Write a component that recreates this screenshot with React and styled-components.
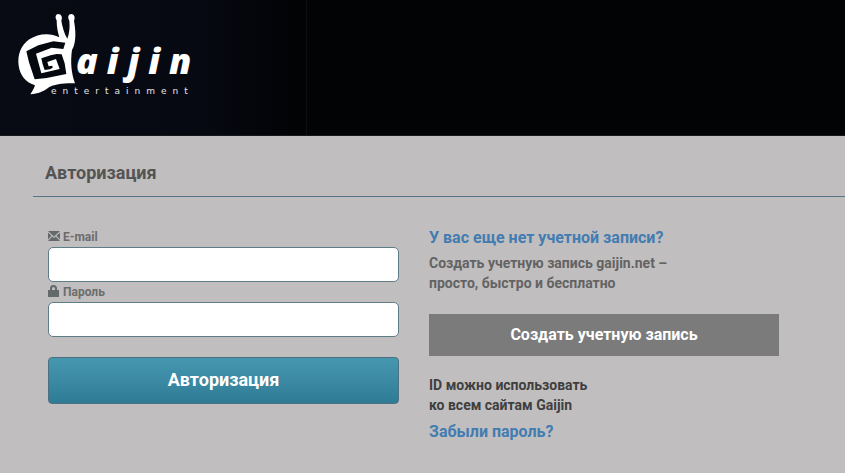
import styled, { createGlobalStyle } from "styled-components";

const GlobalStyle = createGlobalStyle`
  * {
    box-sizing: border-box;
  }

  body {
    margin: 0;
    background: #c0bebf;
    color: #606060;
    font-family: Roboto, "Liberation Sans", sans-serif;
    font-size: 14px;
    font-weight: 700;
    line-height: 20px;
  }
`;

const Header = styled.header`
  display: flex;
  height: 136px;
  border-bottom: 1px solid #15191b;
  background: linear-gradient(to right, #080b14 0, #070912 200px, #020305 290px, #020305 100%);
`;

const Brand = styled.div`
  flex: 0 0 307px;
  border-right: 1px solid #0c0e11;
`;

const LogoLink = styled.a`
  display: block;
  width: 200px;
`;

const LogoSvg = styled.svg`
  display: block;
`;

const Wordmark = styled.text`
  fill: #fff;
  font: italic 800 36px "Open Sans", sans-serif;
  letter-spacing: 9px;
`;

const Tagline = styled.text`
  fill: #e4e6ea;
  font: 400 9px "DejaVu Sans", sans-serif;
  letter-spacing: 6px;
`;

const Main = styled.main`
  padding: 25px 0 24px 33px;
`;

const Heading = styled.h1`
  margin: 0;
  padding: 0 12px 11px;
  border-bottom: 1px solid #587488;
  color: #545454;
  font-size: 18px;
  line-height: 24px;
`;

const Columns = styled.div`
  display: grid;
  grid-template-columns: 351fr 350fr;
  gap: 30px;
  padding: 30px 66px 0 15px;
`;

const Form = styled.form`
  display: flex;
  flex-direction: column;
`;

const Label = styled.label`
  display: flex;
  align-items: center;
  gap: 3px;
  height: 20px;
  color: #6c6c6c;
  font-size: 12px;
`;

const Input = styled.input`
  width: 100%;
  height: 35px;
  padding: 0 10px;
  border: 1px solid #5f7d88;
  border-radius: 5px;
  background: #fff;
  font: inherit;
`;

const LoginButton = styled.button`
  height: 47px;
  margin-top: 20px;
  padding: 0 12px 2px;
  border: 1px solid #4d7080;
  border-radius: 4px;
  background: linear-gradient(#4797b1, #2f7b96);
  color: #fff;
  font: inherit;
  font-size: 18px;
  cursor: pointer;
`;

const Aside = styled.section`
  display: flex;
  flex-direction: column;
  align-items: flex-start;
`;

const TextLink = styled.a`
  color: #437cb1;
  font-size: 16px;
  line-height: 22px;
  text-decoration: none;

  &:hover {
    text-decoration: underline;
  }
`;

const Text = styled.p`
  margin: 0;
  padding: 4px 0 6px;
  color: ${({ $dark }) => ($dark ? "#3f3f3f" : "#636363")};
`;

const CreateButton = styled.button`
  width: 100%;
  height: 42px;
  margin: 15px 0;
  border: 0;
  background: #7b7b7b;
  color: #fff;
  font: inherit;
  font-size: 16px;
  cursor: pointer;
`;

const Logo = () => (
  <LogoSvg width="200" height="110" viewBox="0 0 200 110">
    <g transform="translate(10 5) scale(0.3333)">
      <path
        fill="#fff"
        d="M148 97C120 82 85 85 58 103C32 122 22 150 26 182C30 212 48 232 75 241C72 252 66 260 61 268C85 266 98 261 118 246C140 236 168 235 195 235C184 205 181 170 186 135C200 112 197 75 192 48C197 36 192 27 184 27C175 27 172 37 178 47C180 68 178 85 172 101C162 84 157 65 154 47C159 36 153 27 145 27C137 27 134 37 140 46C140 67 144 84 148 97Z"
      />
      <path
        fill="#06080f"
        d="M166 113L130 109L85 121L49 139L57 172L74 223L110 219L169 207L164 175L155 148L140 147L122 151L94 160L98 178L104 195L120 193L128 188L127 182L116 184L112 171L138 162L149 192L94 205L78 146L125 128L160 132Z"
      />
    </g>
    <Wordmark x="76" y="74">aijin</Wordmark>
    <Tagline x="51" y="94">entertainment</Tagline>
  </LogoSvg>
);

const MailIcon = () => (
  <svg width="12" height="12" viewBox="0 0 12 12" aria-hidden="true">
    <path
      fill="#646a6a"
      d="M0 0h12L6 5.500ZM0 1.500L3.500 4.800L0 8.500ZM12 1.500V8.500L8.500 4.800ZM4.300 5.600L6 7.100L7.700 5.600L12 10H0Z"
    />
  </svg>
);

const LockIcon = () => (
  <svg width="12" height="14" viewBox="0 0 12 14" aria-hidden="true">
    <path fill="#646a6a" d="M0 5h11v7H0z" />
    <path fill="none" stroke="#646a6a" strokeWidth="2" d="M3 6V3.500a2.500 2.500 0 0 1 5 0V6" />
  </svg>
);

const App = () => (
  <>
    <GlobalStyle />
    <Header>
      <Brand>
        <LogoLink href="/" aria-label="Gaijin Entertainment">
          <Logo />
        </LogoLink>
      </Brand>
    </Header>

    <Main>
      <Heading>Авторизация</Heading>

      <Columns>
        <Form onSubmit={(e) => e.preventDefault()}>
          <Label htmlFor="email">
            <MailIcon />
            E-mail
          </Label>
          <Input id="email" type="email" name="email" />
          <Label htmlFor="password">
            <LockIcon />
            Пароль
          </Label>
          <Input id="password" type="password" name="password" />
          <LoginButton type="submit">Авторизация</LoginButton>
        </Form>

        <Aside>
          <TextLink href="#register">У вас еще нет учетной записи?</TextLink>
          <Text>
            Создать учетную запись gaijin.net –<br />
            просто, быстро и бесплатно
          </Text>
          <CreateButton type="button">Создать учетную запись</CreateButton>
          <Text $dark>
            ID можно использовать
            <br />
            ко всем сайтам Gaijin
          </Text>
          <TextLink href="#restore">Забыли пароль?</TextLink>
        </Aside>
      </Columns>
    </Main>
  </>
);

export default App;
